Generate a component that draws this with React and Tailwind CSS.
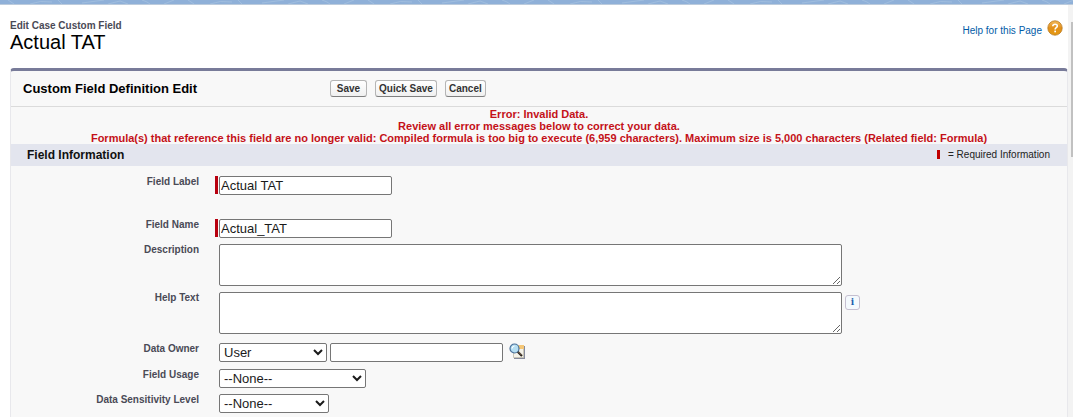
import React from "react";

const control =
  "border border-[#767676] rounded-[2px] bg-white text-[13px] text-[#1a1a1a]";

function Row({ id, label, required, height, children }) {
  return (
    <div className={`flex items-start ${height}`}>
      <label
        htmlFor={id}
        className="w-[188px] shrink-0 text-right text-[10px] leading-3 font-bold text-[#4a4a56]"
      >
        {label}
      </label>
      <div className="ml-4 flex min-w-0 flex-1 items-start">
        <span
          className={`mr-px h-[18px] w-[3px] shrink-0 ${required ? "bg-[#b8000f]" : ""}`}
        />
        {children}
      </div>
    </div>
  );
}

function ActionButton({ children }) {
  return (
    <button
      type="button"
      className="h-[17px] min-w-[37px] rounded-[3px] border border-[#b5b5b5] border-b-[#7f7f7f] bg-linear-to-b from-white to-[#f0f0f0] px-[3px] text-[10px] leading-[15px] font-bold text-[#333333]"
    >
      {children}
    </button>
  );
}

function HelpIcon() {
  return (
    <svg width="16" height="16" viewBox="0 0 16 16" aria-hidden="true">
      <defs>
        <linearGradient id="helpFill" x1="0" y1="0" x2="0" y2="1">
          <stop offset="0" stopColor="#f2b95c" />
          <stop offset="0.5" stopColor="#e3901a" />
          <stop offset="1" stopColor="#e59a10" />
        </linearGradient>
      </defs>
      <circle cx="8" cy="8" r="7.2" fill="url(#helpFill)" stroke="#b97a22" strokeWidth="0.8" />
      <path
        d="M5.8 6.2C5.9 3.7 10.3 3.7 10.3 6C10.3 7.6 8.1 7.6 8.1 9.4"
        fill="none"
        stroke="#fff"
        strokeWidth="1.6"
      />
      <rect x="7.3" y="10.6" width="1.7" height="1.7" fill="#fff" />
    </svg>
  );
}

function LookupIcon() {
  return (
    <svg width="17" height="17" viewBox="0 0 17 17" aria-hidden="true">
      <path d="M5 3h11v13H5z" fill="#858a9c" />
      <path d="M4.5 2.5h10v12h-10z" fill="#f5f3ea" stroke="#c9c6b8" strokeWidth="1" />
      <path d="M8 2h7v4H8z" fill="#f5c777" />
      <path d="M8.5 8.500L13 13" stroke="#29221c" strokeWidth="2.2" />
      <path d="M9.5 9L12.500 12" stroke="#9a846c" strokeWidth="0.8" />
      <circle cx="5.5" cy="5.5" r="4.500" fill="#b5def2" stroke="#4a7099" strokeWidth="1.2" />
      <path d="M3 5.500C3.2 4 4 3.2 5.500 3" fill="none" stroke="#fff" strokeWidth="1.2" />
    </svg>
  );
}

function BannerPattern() {
  return (
    <svg className="block h-1 w-full" aria-hidden="true">
      <defs>
        <pattern id="swirl" width="180" height="4" patternUnits="userSpaceOnUse">
          <path
            d="M8 0L14 4M30 4Q40 0 52 2M58 0L62 4M82 3L104 0M108 4L120 1L128 4M142 0Q148 2 150 4M164 4L174 0"
            fill="none"
            stroke="#a3c0e0"
            strokeWidth="0.8"
          />
        </pattern>
      </defs>
      <rect width="100%" height="4" fill="#8fb0d8" />
      <rect width="100%" height="4" fill="url(#swirl)" />
    </svg>
  );
}

export default function App() {
  return (
    <div className="flex min-h-screen flex-col bg-white font-['Liberation_Sans',Arial,sans-serif]">
      <header className="border-b border-[#bccbdc]">
        <BannerPattern />
      </header>
      <div className="flex flex-1">
        <main className="flex min-w-0 flex-1 flex-col pl-[10px]">
          <div className="flex h-[63px] items-start justify-between pt-[15px] pr-[5px]">
            <h1 className="text-[20px] leading-[21px] text-black">
              <span className="block text-[10px] leading-3 font-bold text-[#4a4a56]">
                Edit Case Custom Field
              </span>
              Actual TAT
            </h1>
            <a href="#help" className="flex gap-[5px] text-[10px] text-[#015ba7]">
              <span className="pt-[5px] leading-3">Help for this Page</span>
              <HelpIcon />
            </a>
          </div>

          <form className="flex-1 rounded-t-[4px] border-x border-t-[3px] border-x-[#e8e8ec] border-t-[#787b99] bg-[#f8f8f8]">
            <div className="flex h-9 items-center border-b border-[#dbdbdb] pl-3">
              <h2 className="w-[307px] text-[13px] font-bold text-black">
                Custom Field Definition Edit
              </h2>
              <div className="flex gap-2">
                <ActionButton>Save</ActionButton>
                <ActionButton>Quick Save</ActionButton>
                <ActionButton>Cancel</ActionButton>
              </div>
            </div>

            <div
              role="alert"
              className="pt-px text-center text-[11px] leading-3 font-bold text-[#c41118]"
            >
              Error: Invalid Data.
              <br />
              Review all error messages below to correct your data.
              <br />
              Formula(s) that reference this field are no longer valid: Compiled formula is too big
              to execute (6,959 characters). Maximum size is 5,000 characters (Related field:
              Formula)
            </div>

            <div className="flex h-[22px] items-center justify-between bg-[#e3e5ee] pr-[17px] pl-4">
              <h3 className="text-[12px] font-bold text-[#111111]">Field Information</h3>
              <span className="flex items-center gap-2 pb-[2px] text-[10px] text-[#222222]">
                <span className="h-[9px] w-[3px] bg-[#c00000]" />= Required Information
              </span>
            </div>

            <div className="pt-[10px]">
              <Row id="label" label="Field Label" required height="h-[43px]">
                <input id="label" defaultValue="Actual TAT" className={`${control} h-[19px] w-[173px] px-px`} />
              </Row>
              <Row id="name" label="Field Name" required height="h-[25px]">
                <input id="name" defaultValue="Actual_TAT" className={`${control} h-[19px] w-[173px] px-px`} />
              </Row>
              <Row id="description" label="Description" height="h-12">
                <textarea id="description" className={`${control} h-[42px] w-[623px]`} />
              </Row>
              <Row id="help" label="Help Text" height="h-[51px]">
                <textarea id="help" className={`${control} h-[42px] w-[623px]`} />
                <button
                  type="button"
                  aria-label="Info"
                  className="mt-[3px] ml-[3px] h-[15px] w-[15px] rounded-[3px] border border-[#c5bfd0] bg-[#f4f9fd] font-['DejaVu_Serif',serif] text-[9px] leading-[13px] font-bold text-[#1c5fae]"
                >
                  i
                </button>
              </Row>
              <Row id="owner" label="Data Owner" height="h-[26px]">
                <select id="owner" className={`${control} h-[19px] w-[108px]`}>
                  <option>User</option>
                </select>
                <input aria-label="Owner name" className={`${control} ml-[3px] h-[19px] w-[173px] px-px`} />
                <button type="button" aria-label="Owner lookup" className="ml-[6px]">
                  <LookupIcon />
                </button>
              </Row>
              <Row id="usage" label="Field Usage" height="h-[25px]">
                <select id="usage" className={`${control} h-[19px] w-[147px]`}>
                  <option>--None--</option>
                </select>
              </Row>
              <Row id="sensitivity" label="Data Sensitivity Level" height="h-[23px]">
                <select id="sensitivity" className={`${control} h-[19px] w-[110px]`}>
                  <option>--None--</option>
                </select>
              </Row>
            </div>
          </form>
        </main>
        <div className="w-[5px] shrink-0 bg-[#f3f3f3] pt-[17px] pl-[3px]" aria-hidden="true">
          <div className="h-[135px] bg-[#c1c1c1]" />
        </div>
      </div>
    </div>
  );
}
